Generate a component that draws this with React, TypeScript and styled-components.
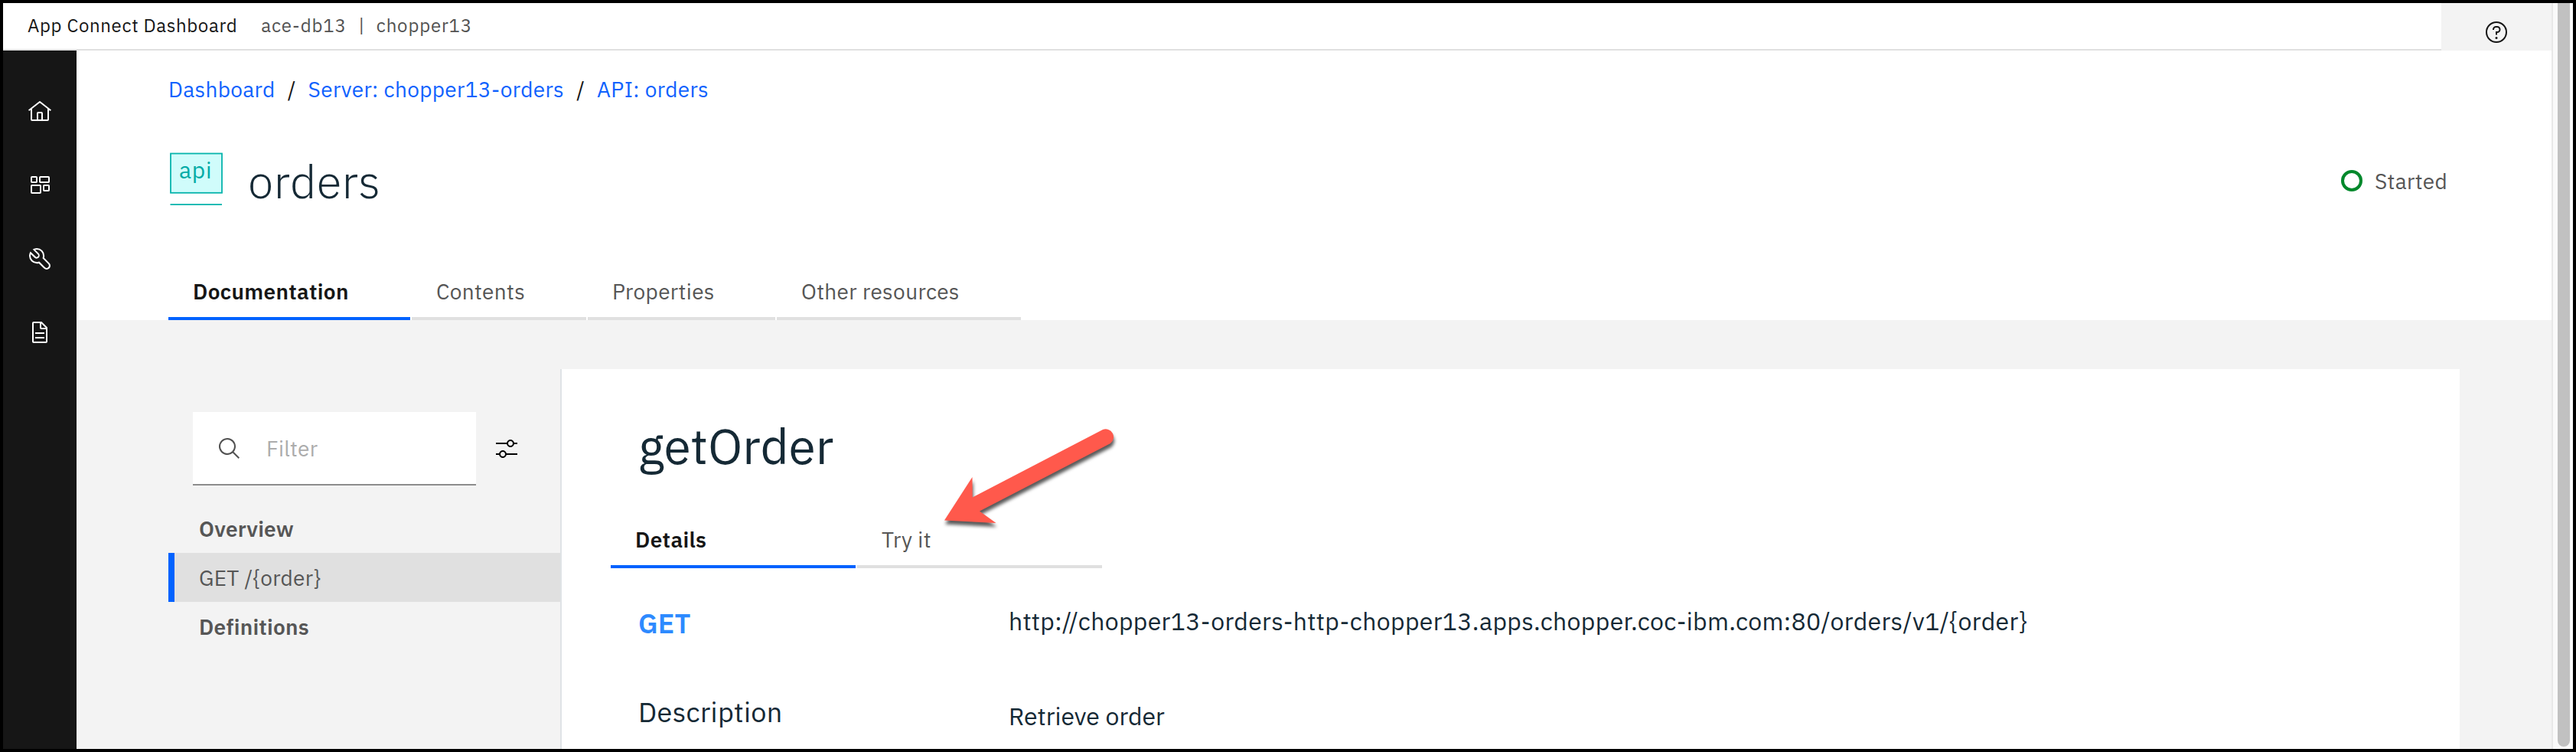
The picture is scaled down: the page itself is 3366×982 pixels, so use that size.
import React from "react";
import styled, { createGlobalStyle } from "styled-components";

const GlobalStyle = createGlobalStyle`
  *, *::before, *::after { box-sizing: border-box; }
  body {
    margin: 0;
    background: #000;
    font-family: "IBM Plex Sans", Roboto, "Liberation Sans", sans-serif;
  }
`;

const Window = styled.div`
  display: flex;
  width: 3366px;
  height: 982px;
  border: 4px solid #000;
  background: #fff;
  overflow: hidden;
`;

const Page = styled.div`
  flex: 1;
  min-width: 0;
  display: flex;
  flex-direction: column;
`;

const ScrollTrack = styled.div`
  flex: none;
  width: 28px;
  padding: 0 4px 3px 6px;
  border-left: 2px solid #e8e8e8;
  background: #fafafa;
`;

const ScrollThumb = styled.div`
  width: 16px;
  height: 100%;
  background: #c1c1c1;
  border-radius: 0 0 8px 8px;
`;

/* Header */

const Header = styled.header`
  flex: none;
  display: flex;
  height: 62px;
`;

const HeaderTitle = styled.div`
  flex: 1;
  display: flex;
  align-items: center;
  padding: 0 0 2px 32px;
  border-bottom: 2px solid #e0e0e0;
  font-size: 24px;
  line-height: 32px;
  color: #525252;
  white-space: nowrap;
`;

const Product = styled.span`
  margin-right: 31px;
  color: #161616;
  letter-spacing: 0.64px;
`;

const Instance = styled.span`
  letter-spacing: 0.85px;
`;

const Pipe = styled.span`
  width: 39px;
  text-align: center;
`;

const HelpButton = styled.div`
  width: 144px;
  padding-top: 14px;
  display: flex;
  align-items: center;
  justify-content: center;
  background: #f3f3f3;
  color: #161616;
`;

const Icon = styled.svg`
  flex: none;
  display: block;
  width: 32px;
  height: 32px;
  fill: currentColor;
`;

/* Body */

const Body = styled.div`
  flex: 1;
  min-height: 0;
  display: flex;
`;

const Rail = styled.nav`
  flex: none;
  width: 96px;
  padding-top: 64px;
  display: flex;
  flex-direction: column;
  align-items: center;
  gap: 64px;
  background: #161616;
  color: #fff;
`;

const Main = styled.main`
  flex: 1;
  min-width: 0;
  display: flex;
  flex-direction: column;
`;

const Hero = styled.section`
  flex: none;
  height: 352px;
  padding: 32px 0 0 120px;
  display: flex;
  flex-direction: column;
  background: #fff;
`;

const Crumbs = styled.div`
  display: flex;
  font-size: 28px;
  line-height: 37px;
  color: #161616;
  white-space: nowrap;
`;

const Crumb = styled.a`
  color: #0f62fe;
  letter-spacing: 0.34px;
`;

const Slash = styled.span`
  width: 43px;
  text-align: center;
`;

const TitleRow = styled.div`
  display: flex;
  align-items: center;
  height: 78px;
  margin-top: 63px;
`;

const ApiBadge = styled.svg`
  flex: none;
  align-self: flex-start;
  width: 72px;
  height: 72px;
  margin-right: 32px;
`;

const Title = styled.h1`
  margin: -1px 0 0;
  font-size: 60px;
  line-height: 79px;
  font-weight: 300;
  letter-spacing: 0.32px;
  color: #152935;
`;

const Status = styled.div`
  display: flex;
  align-items: center;
  gap: 16px;
  width: 275px;
  height: 37px;
  margin: 0 0 1px auto;
  font-size: 28px;
  line-height: 37px;
  letter-spacing: 0.32px;
  color: #565656;
`;

const StatusRing = styled.span`
  width: 28px;
  height: 28px;
  margin-bottom: 1px;
  border: 4px solid #00882b;
  border-radius: 50%;
`;

const Tabs = styled.div`
  display: flex;
  gap: 2px;
`;

const HeroTabs = styled(Tabs)`
  margin-top: auto;
`;

const Tab = styled.div<{ $width: number; $active?: boolean }>`
  width: ${(p) => p.$width}px;
  height: 74px;
  padding: 18px 0 0 32px;
  border-bottom: 4px solid ${(p) => (p.$active ? "#0062ff" : "#e0e0e0")};
  font-size: 28px;
  line-height: 37px;
  font-weight: ${(p) => (p.$active ? 600 : 400)};
  letter-spacing: 0.35px;
  color: ${(p) => (p.$active ? "#161616" : "#565656")};
  white-space: nowrap;
`;

const Content = styled.section`
  flex: 1;
  min-height: 0;
  display: flex;
  padding: 64px 120px 0 120px;
  background: #f3f3f3;
`;

/* Side navigation */

const Side = styled.aside`
  flex: none;
  width: 512px;
  padding-top: 56px;
`;

const SearchRow = styled.div`
  display: flex;
  align-items: center;
  gap: 24px;
  margin: 0 0 24px 32px;
`;

const SearchBox = styled.div`
  display: flex;
  align-items: center;
  gap: 32px;
  width: 370px;
  height: 96px;
  padding: 1px 0 0 32px;
  border-bottom: 2px solid #8d8d8d;
  background: #fff;
  color: #525252;
`;

const SearchIcon = styled(Icon)`
  margin-top: 1px;
`;

const Placeholder = styled.span`
  font-size: 28px;
  line-height: 37px;
  letter-spacing: 0.32px;
  color: #acacac;
`;

const NavItem = styled.div<{ $selected?: boolean }>`
  display: flex;
  align-items: center;
  height: 64px;
  padding: 1px 0 0 32px;
  border-left: 8px solid ${(p) => (p.$selected ? "#0062ff" : "transparent")};
  background: ${(p) => (p.$selected ? "#e0e0e0" : "transparent")};
  font-size: 28px;
  line-height: 37px;
  font-weight: ${(p) => (p.$selected ? 400 : 600)};
  letter-spacing: 0.25px;
  color: #565656;
`;

/* Operation panel */

const Panel = styled.article`
  position: relative;
  flex: 1;
  padding: 58px 0 0 64px;
  border-left: 2px solid #dfe3e6;
  background: #fff;
  color: #152935;
`;

const Operation = styled.h2`
  margin: 0 0 44px;
  padding-left: 36px;
  font-size: 64px;
  line-height: 84px;
  font-weight: 400;
`;

const Fields = styled.div`
  display: flex;
  flex-direction: column;
  gap: 69px;
  padding: 48px 0 0 36px;
`;

const Field = styled.div`
  display: grid;
  grid-template-columns: 484px 1fr;
  align-items: start;
  height: 47px;
  white-space: nowrap;
`;

const Label = styled.div`
  font-size: 36px;
  line-height: 47px;
  letter-spacing: 0.36px;
`;

const Method = styled(Label)`
  font-weight: 600;
  letter-spacing: 0.1px;
  color: #2d8aff;
`;

const Value = styled.div`
  font-size: 32px;
  line-height: 42px;
`;

const Endpoint = styled(Value)`
  letter-spacing: 0.33px;
`;

const Summary = styled(Value)`
  padding-top: 8px;
`;

const Arrow = styled.svg`
  position: absolute;
  left: 486px;
  top: 58px;
  width: 250px;
  height: 170px;
  overflow: visible;
  filter: drop-shadow(1px 5px 2px rgba(0, 0, 0, 0.65));
`;

export default function App() {
  return (
    <>
      <GlobalStyle />
      <Window>
        <Page>
          <Header>
            <HeaderTitle>
              <Product>App Connect Dashboard</Product>
              <Instance>ace-db13</Instance>
              <Pipe>|</Pipe>
              <Instance>chopper13</Instance>
            </HeaderTitle>
            <HelpButton>
              <Icon viewBox="0 0 32 32">
                <path d="M16,2A14,14,0,1,0,30,16,14,14,0,0,0,16,2Zm0,26A12,12,0,1,1,28,16,12,12,0,0,1,16,28Z" />
                <circle cx="16" cy="23.5" r="1.5" />
                <path d="M17,8H15.5A4.49,4.49,0,0,0,11,12.5V13h2v-.5A2.5,2.5,0,0,1,15.5,10H17a2.5,2.5,0,0,1,0,5H15v4.5h2V17a4.5,4.5,0,0,0,0-9Z" />
              </Icon>
            </HelpButton>
          </Header>
          <Body>
            <Rail>
              <Icon viewBox="0 0 32 32">
                <path d="M16.6123,2.2138a1.01,1.01,0,0,0-1.2427,0L1,13.4194l1.2427,1.5717L4,13.6209V26a2.0041,2.0041,0,0,0,2,2H26a2.0037,2.0037,0,0,0,2-2V13.63L29.7573,15,31,13.4282ZM18,26H14V18h4Zm2,0V18a2.0023,2.0023,0,0,0-2-2H14a2.002,2.002,0,0,0-2,2v8H6V12.0615l10-7.79,10,7.8V26Z" />
              </Icon>
              <Icon viewBox="0 0 32 32">
                <g fill="none" stroke="currentColor" strokeWidth="2">
                  <rect x="5" y="5" width="7" height="7" rx="0.8" />
                  <rect x="16" y="5" width="12" height="7" rx="0.8" />
                  <rect x="5" y="16" width="12" height="10" rx="0.8" />
                  <rect x="21" y="16" width="7" height="7" rx="0.8" />
                </g>
              </Icon>
              <Icon viewBox="0 0 32 32">
                <path d="M12.1,2A9.8,9.8,0,0,0,6.7,3.6L13.1,10a2.1,2.1,0,0,1,.2,3,2.1,2.1,0,0,1-3-.2L3.7,6.4A9.84,9.84,0,0,0,2,12.1,10.14,10.14,0,0,0,12.1,22.2a10.9,10.9,0,0,0,2.6-.3l6.7,6.7a5,5,0,0,0,7.1-7.1l-6.7-6.7a10.9,10.9,0,0,0,.3-2.6A10,10,0,0,0,12.1,2Zm8,10.1a7.61,7.61,0,0,1-.3,2.1l-.3,1.1.8.8,6.7,6.7a2.88,2.88,0,0,1,.9,2.1A2.72,2.72,0,0,1,27,27a2.9,2.9,0,0,1-4.2,0l-6.7-6.7-.8-.8-1.1.3a7.61,7.61,0,0,1-2.1.3,8.27,8.27,0,0,1-5.7-2.3A7.63,7.63,0,0,1,4,12.1a8.33,8.33,0,0,1,.3-2.2l4.4,4.4a4.14,4.14,0,0,0,5.9.2,4.14,4.14,0,0,0-.2-5.9L10,4.2a6.45,6.45,0,0,1,2-.3,8.27,8.27,0,0,1,5.7,2.3A8.49,8.49,0,0,1,20.1,12.1Z" />
              </Icon>
              <Icon viewBox="0 0 32 32">
                <path
                  fillRule="evenodd"
                  d="M25.7,9.3l-7-7C18.5,2.1,18.3,2,18,2H8C6.9,2,6,2.9,6,4v24c0,1.1,0.9,2,2,2h16c1.1,0,2-0.9,2-2V10C26,9.7,25.9,9.5,25.7,9.3z M18,4.4l5.6,5.6H18V4.4z M24,28H8V4h8v6c0,1.1,0.9,2,2,2h6V28z"
                />
                <rect x="10" y="16" width="12" height="2" />
                <rect x="10" y="22" width="12" height="2" />
              </Icon>
            </Rail>
            <Main>
              <Hero>
                <Crumbs>
                  <Crumb>Dashboard</Crumb>
                  <Slash>/</Slash>
                  <Crumb>Server: chopper13-orders</Crumb>
                  <Slash>/</Slash>
                  <Crumb>API: orders</Crumb>
                </Crumbs>
                <TitleRow>
                  <ApiBadge viewBox="0 0 72 72">
                    <rect x="3" y="2.5" width="67" height="51.3" fill="#d0fcfb" stroke="#06b4ac" strokeWidth="1.8" />
                    <rect x="2.5" y="68.2" width="67.5" height="1.8" fill="#06b4ac" />
                    <text x="14" y="35.3" fontSize="30" letterSpacing="0.8" fill="#00aba6">
                      api
                    </text>
                  </ApiBadge>
                  <Title>orders</Title>
                  <Status>
                    <StatusRing />
                    Started
                  </Status>
                </TitleRow>
                <HeroTabs>
                  <Tab $width={316} $active>
                    Documentation
                  </Tab>
                  <Tab $width={228}>Contents</Tab>
                  <Tab $width={245}>Properties</Tab>
                  <Tab $width={319}>Other resources</Tab>
                </HeroTabs>
              </Hero>
              <Content>
                <Side>
                  <SearchRow>
                    <SearchBox>
                      <SearchIcon viewBox="0 0 32 32">
                        <path d="M29,27.5859l-7.5521-7.5521a11.0177,11.0177,0,1,0-1.4141,1.4141L27.5859,29ZM4,13a9,9,0,1,1,9,9A9.01,9.01,0,0,1,4,13Z" />
                      </SearchIcon>
                      <Placeholder>Filter</Placeholder>
                    </SearchBox>
                    <Icon viewBox="0 0 32 32">
                      <path d="M30 8h-4.1c-.5-2.3-2.5-4-4.9-4s-4.4 1.7-4.9 4H2v2h14.1c.5 2.3 2.5 4 4.9 4s4.4-1.7 4.9-4H30V8zm-9 4c-1.7 0-3-1.3-3-3s1.3-3 3-3 3 1.3 3 3-1.3 3-3 3zM2 24h4.1c.5 2.3 2.5 4 4.9 4s4.4-1.7 4.9-4H30v-2H15.9c-.5-2.3-2.5-4-4.9-4s-4.4 1.7-4.9 4H2v2zm9-4c1.7 0 3 1.3 3 3s-1.3 3-3 3-3-1.3-3-3 1.3-3 3-3z" />
                    </Icon>
                  </SearchRow>
                  <NavItem>Overview</NavItem>
                  <NavItem $selected>{"GET /{order}"}</NavItem>
                  <NavItem>Definitions</NavItem>
                </Side>
                <Panel>
                  <Operation>getOrder</Operation>
                  <Tabs>
                    <Tab $width={320} $active>
                      Details
                    </Tab>
                    <Tab $width={320}>Try it</Tab>
                  </Tabs>
                  <Fields>
                    <Field>
                      <Method>GET</Method>
                      <Endpoint>
                        {"http://chopper13-orders-http-chopper13.apps.chopper.coc-ibm.com:80/orders/v1/{order}"}
                      </Endpoint>
                    </Field>
                    <Field>
                      <Label>Description</Label>
                      <Summary>Retrieve order</Summary>
                    </Field>
                  </Fields>
                  <Arrow viewBox="0 0 250 170">
                    <path
                      fill="#ff594c"
                      d="M14 139.5 L50.5 83 L50.7 109.5 L221 21 A10.4 10.4 0 0 1 231 39 L60 127.5 L81.5 143 Z"
                    />
                  </Arrow>
                </Panel>
              </Content>
            </Main>
          </Body>
        </Page>
        <ScrollTrack>
          <ScrollThumb />
        </ScrollTrack>
      </Window>
    </>
  );
}
